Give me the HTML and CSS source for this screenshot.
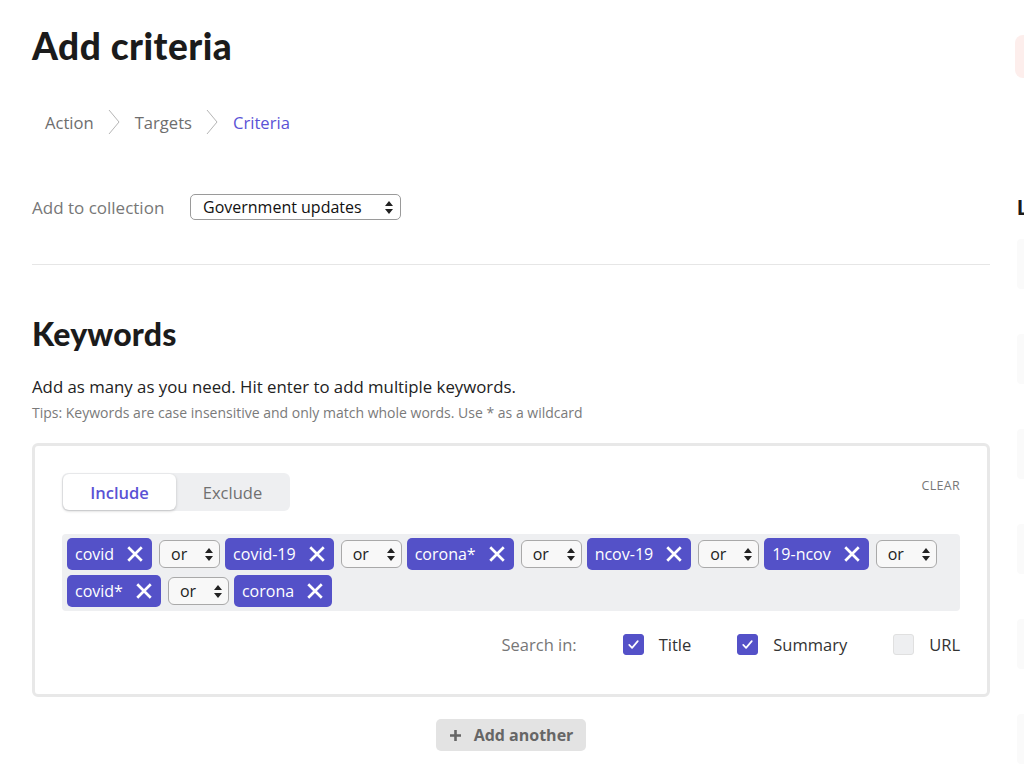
FILE: index.html
```html
<!DOCTYPE html>
<html>
<head>
<meta charset="utf-8">
<link rel="stylesheet" href="styles.css">
</head>
<body>
<div class="page">
  <main class="main">
    <h1 class="title">Add criteria</h1>
    <nav class="crumbs">
      <span class="crumb">Action</span>
      <svg class="chev" width="12" height="26" viewBox="0 0 12 26"><path d="M1 1 L11 13 L1 25" fill="none" stroke="#b5b5b5" stroke-width="1"/></svg>
      <span class="crumb">Targets</span>
      <svg class="chev" width="12" height="26" viewBox="0 0 12 26"><path d="M1 1 L11 13 L1 25" fill="none" stroke="#b5b5b5" stroke-width="1"/></svg>
      <span class="crumb current">Criteria</span>
    </nav>
    <div class="collection">
      <span class="label">Add to collection</span>
      <div class="select">
        <span>Government updates</span>
        <svg class="updown" width="8" height="13" viewBox="0 0 8 13"><path d="M4 0 L8 5 L0 5 Z M0 8 L8 8 L4 13 Z" fill="#222"/></svg>
      </div>
    </div>
    <hr class="rule">
    <h2 class="section">Keywords</h2>
    <p class="desc">Add as many as you need. Hit enter to add multiple keywords.</p>
    <p class="tips">Tips: Keywords are case insensitive and only match whole words. Use * as a wildcard</p>

    <div class="box">
      <div class="box-head">
        <div class="tabs">
          <span class="tab active">Include</span>
          <span class="tab">Exclude</span>
        </div>
        <span class="clear">CLEAR</span>
      </div>
      <div class="chips">
        <span class="chip">covid<svg class="x" viewBox="0 0 16 16"><path d="M2 2 L14 14 M14 2 L2 14"/></svg></span>
        <span class="or">or<svg width="8" height="13" viewBox="0 0 8 13"><path d="M4 0 L8 5 L0 5 Z M0 8 L8 8 L4 13 Z" fill="#222"/></svg></span>
        <span class="chip">covid-19<svg class="x" viewBox="0 0 16 16"><path d="M2 2 L14 14 M14 2 L2 14"/></svg></span>
        <span class="or">or<svg width="8" height="13" viewBox="0 0 8 13"><path d="M4 0 L8 5 L0 5 Z M0 8 L8 8 L4 13 Z" fill="#222"/></svg></span>
        <span class="chip">corona*<svg class="x" viewBox="0 0 16 16"><path d="M2 2 L14 14 M14 2 L2 14"/></svg></span>
        <span class="or">or<svg width="8" height="13" viewBox="0 0 8 13"><path d="M4 0 L8 5 L0 5 Z M0 8 L8 8 L4 13 Z" fill="#222"/></svg></span>
        <span class="chip">ncov-19<svg class="x" viewBox="0 0 16 16"><path d="M2 2 L14 14 M14 2 L2 14"/></svg></span>
        <span class="or">or<svg width="8" height="13" viewBox="0 0 8 13"><path d="M4 0 L8 5 L0 5 Z M0 8 L8 8 L4 13 Z" fill="#222"/></svg></span>
        <span class="chip">19-ncov<svg class="x" viewBox="0 0 16 16"><path d="M2 2 L14 14 M14 2 L2 14"/></svg></span>
        <span class="or">or<svg width="8" height="13" viewBox="0 0 8 13"><path d="M4 0 L8 5 L0 5 Z M0 8 L8 8 L4 13 Z" fill="#222"/></svg></span>
        <span class="chip">covid*<svg class="x" viewBox="0 0 16 16"><path d="M2 2 L14 14 M14 2 L2 14"/></svg></span>
        <span class="or">or<svg width="8" height="13" viewBox="0 0 8 13"><path d="M4 0 L8 5 L0 5 Z M0 8 L8 8 L4 13 Z" fill="#222"/></svg></span>
        <span class="chip">corona<svg class="x" viewBox="0 0 16 16"><path d="M2 2 L14 14 M14 2 L2 14"/></svg></span>
      </div>
      <div class="search-in">
        <span class="si-label">Search in:</span>
        <span class="opt"><span class="cb checked"><svg viewBox="0 0 20 20"><path d="M5.5 10.5 L8.5 13.5 L14.5 6.5" fill="none" stroke="#fff" stroke-width="1.8" stroke-linecap="round" stroke-linejoin="round"/></svg></span>Title</span>
        <span class="opt"><span class="cb checked"><svg viewBox="0 0 20 20"><path d="M5.5 10.5 L8.5 13.5 L14.5 6.5" fill="none" stroke="#fff" stroke-width="1.8" stroke-linecap="round" stroke-linejoin="round"/></svg></span>Summary</span>
        <span class="opt"><span class="cb"></span>URL</span>
      </div>
    </div>

    <div class="add-row">
      <button class="add-btn"><svg width="13" height="13" viewBox="0 0 13 13"><path d="M6.5 1 V12 M1 6.5 H12" stroke="#666" stroke-width="2.6"/></svg>Add another</button>
    </div>
  </main>
  <aside class="side">
    <div class="alert"></div>
    <div class="side-title">L</div>
    <div class="card"></div>
    <div class="card"></div>
    <div class="card"></div>
    <div class="card"></div>
    <div class="card"></div>
    <div class="card"></div>
  </aside>
</div>
</body>
</html>
```

FILE: styles.css
```css
* { box-sizing: border-box; }
html, body { margin: 0; padding: 0; background: #fff; }
body {
  font-family: "Open Sans", "Noto Sans", sans-serif;
  color: #222;
  width: 1024px;
  height: 770px;
  overflow: hidden;
}
.page {
  display: flex;
  align-items: flex-start;
}
.main {
  width: 990px;
  flex: none;
  padding: 24px 0 0 32px;
}
.title {
  margin: 0;
  font-family: "Lato", sans-serif;
  font-weight: 900;
  font-size: 37px;
  line-height: 44px;
  color: #1b1b1b;
  letter-spacing: 0.5px;
}
.crumbs {
  margin-top: 41px;
  padding-left: 13px;
  display: flex;
  align-items: center;
  height: 26px;
}
.crumb {
  font-size: 16.6px;
  color: #6e6e6e;
}
.crumb.current { color: #5b52d6; }
.chev { margin: 0 15px 0 14px; }
.collection {
  margin-top: 59px;
  display: flex;
  align-items: center;
}
.label {
  font-size: 17px;
  color: #777;
  width: 158px;
}
.select {
  width: 211px;
  height: 26px;
  border: 1px solid #9a9a9a;
  border-radius: 5px;
  display: flex;
  align-items: center;
  justify-content: space-between;
  padding: 0 7px 0 12px;
  font-size: 16px;
  color: #111;
}
.rule {
  margin: 44px 0 0 0;
  border: 0;
  border-top: 1px solid #e6e6e6;
}
.section {
  margin: 51px 0 0 0;
  font-family: "Lato", sans-serif;
  font-weight: 900;
  font-size: 32px;
  line-height: 36px;
  color: #1b1b1b;
  letter-spacing: 0.2px;
}
.desc {
  margin: 24px 0 0 0;
  font-size: 16.8px;
  line-height: 22px;
  color: #222;
}
.tips {
  margin: 6px 0 0 0;
  font-size: 14px;
  line-height: 18px;
  color: #7a7a7a;
}
.box {
  margin-top: 21px;
  border: 3px solid #e8e8e8;
  border-radius: 6px;
  padding: 27px 27px 38px 27px;
}
.box-head {
  display: flex;
  justify-content: space-between;
  align-items: flex-start;
}
.tabs {
  display: flex;
  width: 228px;
  height: 38px;
  background: #eeeff1;
  border-radius: 6px;
  padding: 1px;
}
.tab {
  flex: 1;
  display: flex;
  align-items: center;
  justify-content: center;
  font-size: 16.5px;
  color: #707070;
}
.tab.active {
  flex: 0 0 113px;
  background: #fff;
  border-radius: 6px;
  color: #5a52d5;
  font-weight: 600;
  box-shadow: 0 1px 3px rgba(0,0,0,0.22);
}
.clear {
  font-size: 12.5px;
  color: #777;
  margin-top: 4px;
  letter-spacing: 0.3px;
}
.chips {
  margin-top: 23px;
  background: #eeeff1;
  border-radius: 4px;
  padding: 4px 5px;
  display: flex;
  flex-wrap: wrap;
  align-items: center;
  gap: 5px 5px;
}
.chip {
  height: 32px;
  background: #5451c8;
  color: #fff;
  border-radius: 5px;
  display: inline-flex;
  align-items: center;
  padding: 0 8px 0 8px;
  font-size: 16px;
}
.x {
  width: 18px;
  height: 18px;
  margin-left: 12px;
  stroke: #fff;
  stroke-width: 2.4;
  fill: none;
}
.or {
  height: 28px;
  width: 61px;
  border: 1px solid #a9a9a9;
  border-radius: 6px;
  background: #f8f8f8;
  display: inline-flex;
  align-items: center;
  justify-content: space-between;
  padding: 0 6px 0 11px;
  font-size: 16px;
  color: #222;
  margin: 0 0 0 2px;
}
.search-in {
  margin-top: 21px;
  display: flex;
  justify-content: flex-end;
  align-items: center;
  height: 24px;
}
.si-label {
  font-size: 16.5px;
  color: #777;
}
.opt {
  display: inline-flex;
  align-items: center;
  font-size: 16.5px;
  color: #333;
  margin-left: 46px;
}
.opt:first-of-type { margin-left: 37px; }
.cb {
  width: 21px;
  height: 21px;
  border-radius: 3px;
  background: #eeeff1;
  border: 1px solid #e0e0e0;
  margin-right: 15px;
  display: inline-block;
}
.cb.checked {
  background: #5451c8;
  border-color: #5451c8;
}
.cb svg { display: block; width: 19px; height: 19px; }
.add-row {
  margin-top: 22px;
  display: flex;
  justify-content: center;
}
.add-btn {
  width: 150px;
  height: 32px;
  border: 0;
  border-radius: 5px;
  background: #e3e3e3;
  color: #666;
  font-family: "Open Sans", sans-serif;
  font-weight: 700;
  font-size: 16px;
  display: flex;
  align-items: center;
  justify-content: center;
  gap: 12px;
  padding: 0;
}
.side {
  flex: none;
  width: 200px;
  margin-left: 25px;
  padding-top: 35px;
}
.alert {
  height: 43px;
  background: #fdeeec;
  border-radius: 8px;
}
.side-title {
  margin-top: 117px;
  margin-left: 2px;
  font-family: "Lato", sans-serif;
  font-weight: 900;
  font-size: 20px;
  line-height: 24px;
  color: #1b1b1b;
}
.card {
  margin-top: 20px;
  margin-left: 2px;
  height: 50px;
  background: #fafafa;
  border-radius: 4px;
}
.card + .card { margin-top: 45px; }
```
